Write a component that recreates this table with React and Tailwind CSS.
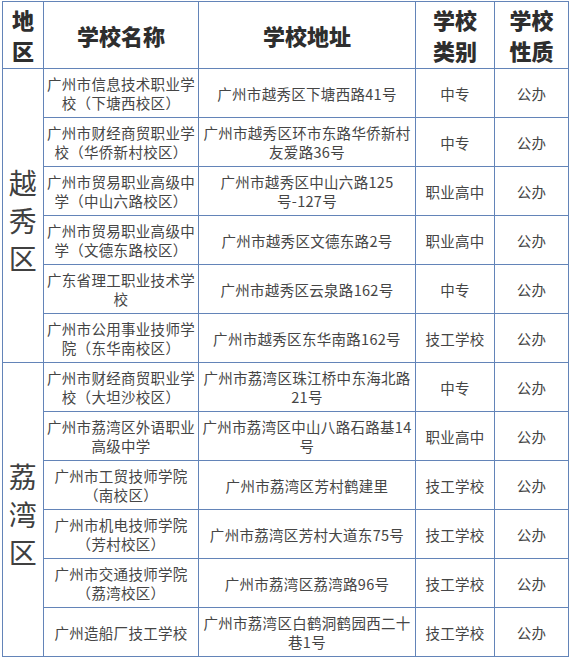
const rows = [
  ["广州市信息技术职业学校（下塘西校区）", "广州市越秀区下塘西路41号", "中专", "公办"],
  ["广州市财经商贸职业学校（华侨新村校区）", "广州市越秀区环市东路华侨新村友爱路36号", "中专", "公办"],
  ["广州市贸易职业高级中学（中山六路校区）", "广州市越秀区中山六路125号-127号", "职业高中", "公办"],
  ["广州市贸易职业高级中学（文德东路校区）", "广州市越秀区文德东路2号", "职业高中", "公办"],
  ["广东省理工职业技术学校", "广州市越秀区云泉路162号", "中专", "公办"],
  ["广州市公用事业技师学院（东华南校区）", "广州市越秀区东华南路162号", "技工学校", "公办"],
  ["广州市财经商贸职业学校（大坦沙校区）", "广州市荔湾区珠江桥中东海北路21号", "中专", "公办"],
  ["广州市荔湾区外语职业高级中学", "广州市荔湾区中山八路石路基14号", "职业高中", "公办"],
  ["广州市工贸技师学院（南校区）", "广州市荔湾区芳村鹤建里", "技工学校", "公办"],
  ["广州市机电技师学院（芳村校区）", "广州市荔湾区芳村大道东75号", "技工学校", "公办"],
  ["广州市交通技师学院（荔湾校区）", "广州市荔湾区荔湾路96号", "技工学校", "公办"],
  ["广州造船厂技工学校", "广州市荔湾区白鹤洞鹤园西二十巷1号", "技工学校", "公办"],
];

// names that break before the bracket in the picture
const nameLines = {
  8: ["广州市工贸技师学院", "（南校区）"],
  9: ["广州市机电技师学院", "（芳村校区）"],
  10: ["广州市交通技师学院", "（荔湾校区）"],
};

const cell = "border border-[#6384b8] text-center align-middle";

function HeadCell({ lines, className = "" }) {
  return (
    <th className={`${cell} ${className} font-black text-[22px] leading-[31px] text-[#2e2e2e]`}>
      {lines.map((l) => (
        <div key={l}>{l}</div>
      ))}
    </th>
  );
}

export default function App() {
  return (
    <div
      className="bg-white w-[569px] h-[659px] overflow-hidden pt-[1px] pl-[2px]"
      style={{ fontFamily: '"Noto Sans CJK SC", "Noto Sans", sans-serif' }}
    >
      <table className="border-collapse table-fixed w-[566px]">
        <colgroup>
          <col className="w-[41px]" />
          <col className="w-[155px]" />
          <col className="w-[217px]" />
          <col className="w-[79px]" />
          <col className="w-[74px]" />
        </colgroup>
        <thead>
          <tr className="h-[67px]">
            <HeadCell lines={["地", "区"]} />
            <HeadCell lines={["学校名称"]} />
            <HeadCell lines={["学校地址"]} />
            <HeadCell lines={["学校", "类别"]} />
            <HeadCell lines={["学校", "性质"]} />
          </tr>
        </thead>
        <tbody className="text-[14.5px] leading-[19px] tracking-[0.3px] text-[#454545]">
          {rows.map(([name, addr, type, kind], i) => (
            <tr key={i} className="h-[49px]">
              {i % 6 === 0 ? (
                <td
                  rowSpan={6}
                  className={`${cell} text-[28px] leading-[38px] text-[#404040] pt-[8px]`}
                >
                  {(i === 0 ? ["越", "秀", "区"] : ["荔", "湾", "区"]).map((c, k) => (
                    <div key={k}>{c}</div>
                  ))}
                </td>
              ) : null}
              <td className={`${cell} px-[1px]`}>
                {nameLines[i]
                  ? nameLines[i].map((l) => <div key={l}>{l}</div>)
                  : name}
              </td>
              <td className={`${cell} px-[1px]`}>{addr}</td>
              <td className={cell}>{type}</td>
              <td className={cell}>{kind}</td>
            </tr>
          ))}
        </tbody>
      </table>
    </div>
  );
}
